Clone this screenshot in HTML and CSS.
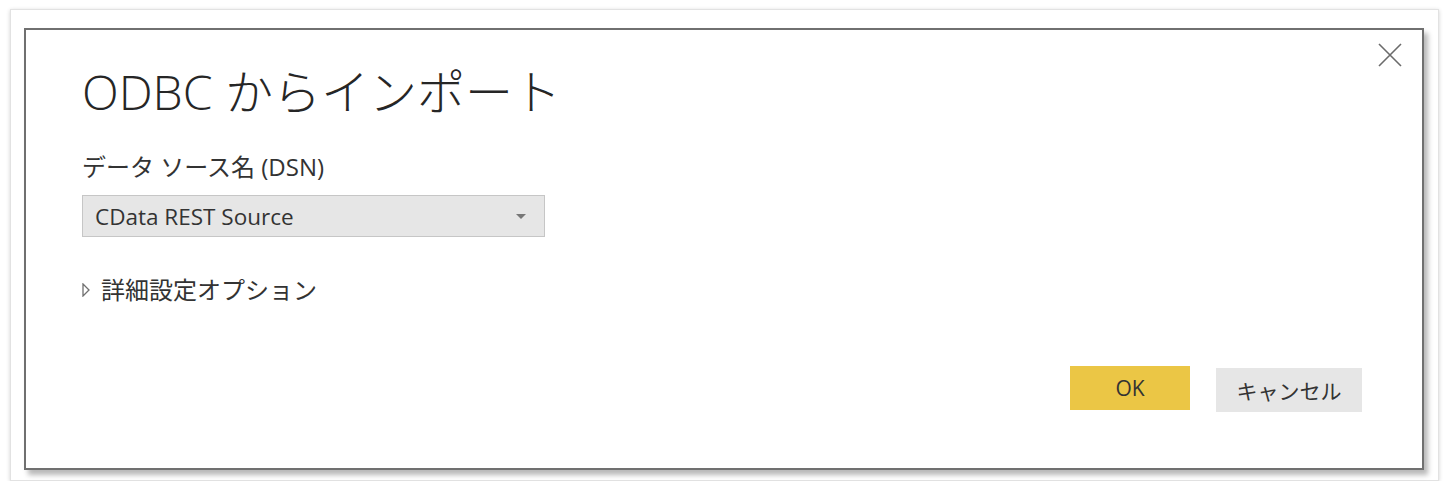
FILE: index.html
```html
<!DOCTYPE html>
<html lang="ja">
<head>
    <meta charset="UTF-8">
    <title>ODBC からインポート</title>
    <link rel="stylesheet" href="styles.css">
</head>
<body>

<div class="frame">
    <div class="dialog">
        <button class="close-button" aria-label="閉じる">
            <svg width="24" height="24" viewBox="0 0 24 24">
                <path d="M1 1 L23 23 M23 1 L1 23" stroke="#6b6b6b" stroke-width="1.6" fill="none"/>
            </svg>
        </button>

        <h1 class="title">ODBC からインポート</h1>

        <div class="field">
            <label class="field-label">データ ソース名 (DSN)</label>
            <div class="select">
                <span class="select-value">CData REST Source</span>
                <span class="select-arrow"></span>
            </div>
        </div>

        <div class="advanced">
            <svg class="advanced-toggle" width="8" height="14" viewBox="0 0 8 14">
                <path d="M1 1 L7 7 L1 13 Z" stroke="#707070" stroke-width="1.3" fill="none"/>
            </svg>
            <span>詳細設定オプション</span>
        </div>

        <div class="actions">
            <button class="btn btn-primary">OK</button>
            <button class="btn btn-secondary">キャンセル</button>
        </div>
    </div>
</div>

</body>
</html>
```

FILE: styles.css
```css
body {
    margin: 0;
    background: #fff;
    font-family: "Open Sans", "Noto Sans CJK JP", sans-serif;
    color: #333;
}

.frame {
    margin: 9px 9px 0 10px;
    height: 472px;
    box-sizing: border-box;
    border: 1px solid #e2e2e2;
    box-shadow: 0 1px 4px rgba(0, 0, 0, 0.18);
    padding: 18px 14px 0 13px;
}

.dialog {
    position: relative;
    height: 442px;
    box-sizing: border-box;
    border: 2px solid #707070;
    background: #fff;
    box-shadow: 4px 5px 5px rgba(0, 0, 0, 0.28);
    padding: 0 60px 0 56px;
    display: flex;
    flex-direction: column;
}

.close-button {
    position: absolute;
    top: 13px;
    right: 20px;
    width: 24px;
    height: 24px;
    padding: 0;
    border: none;
    background: none;
    cursor: pointer;
}

.title {
    margin: 32px 0 0;
    font-size: 48px;
    font-weight: 300;
    line-height: 60px;
    color: #262626;
}

.field {
    margin-top: 29px;
    display: flex;
    flex-direction: column;
}

.field-label {
    font-size: 24px;
    line-height: 32px;
    color: #333;
}

.select {
    margin-top: 12px;
    width: 463px;
    height: 42px;
    box-sizing: border-box;
    border: 1px solid #c6c6c6;
    background: #e6e6e6;
    display: flex;
    align-items: center;
    justify-content: space-between;
    padding: 0 18px 0 12px;
}

.select-value {
    font-size: 22.5px;
    color: #333;
}

.select-arrow {
    width: 0;
    height: 0;
    border-left: 5px solid transparent;
    border-right: 5px solid transparent;
    border-top: 5px solid #777;
}

.advanced {
    margin-top: 37px;
    display: flex;
    align-items: center;
    gap: 11px;
    font-size: 24px;
    line-height: 32px;
    color: #333;
}

.actions {
    margin-top: auto;
    margin-bottom: 56px;
    display: flex;
    justify-content: flex-end;
    align-items: flex-start;
    gap: 26px;
}

.btn {
    height: 44px;
    border: none;
    font-family: "Open Sans", "Noto Sans CJK JP", sans-serif;
    font-size: 21px;
    color: #333;
    cursor: pointer;
}

.btn-primary {
    width: 120px;
    background: #ebc645;
}

.btn-secondary {
    width: 146px;
    margin-top: 2px;
    background: #e6e6e6;
}
```
